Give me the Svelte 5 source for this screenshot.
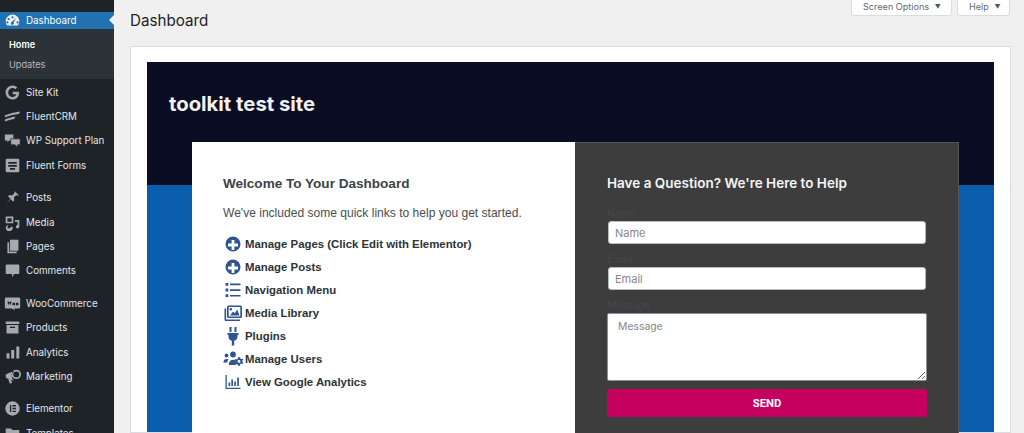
<script>
  const menuGroups = [
    [{ n: 'Site Kit', i: 'g' }, { n: 'FluentCRM', i: 'crm' }, { n: 'WP Support Plan', i: 'chat' }, { n: 'Fluent Forms', i: 'forms' }],
    [{ n: 'Posts', i: 'pin' }, { n: 'Media', i: 'media' }, { n: 'Pages', i: 'pages' }, { n: 'Comments', i: 'comment' }],
    [{ n: 'WooCommerce', i: 'woo' }, { n: 'Products', i: 'box' }, { n: 'Analytics', i: 'bars' }, { n: 'Marketing', i: 'mega' }],
    [{ n: 'Elementor', i: 'el' }, { n: 'Templates', i: 'folder' }]
  ];
  const links = [
    { t: 'Manage Pages (Click Edit with Elementor)', i: 'plus' },
    { t: 'Manage Posts', i: 'plus' },
    { t: 'Navigation Menu', i: 'list' },
    { t: 'Media Library', i: 'images' },
    { t: 'Plugins', i: 'plug' },
    { t: 'Manage Users', i: 'users' },
    { t: 'View Google Analytics', i: 'chart' }
  ];
</script>

{#snippet menuIcon(k)}
  <svg class="micon" viewBox="0 0 20 20" fill="#a7aaad">
    {#if k === 'dash'}
      <path fill="#f0f0f1" d="M10 3a8 8 0 0 0-8 8c0 2 .7 3.800 2 5h12c1.300-1.200 2-3 2-5a8 8 0 0 0-8-8zm0 2a1.300 1.300 0 1 1 0 2.600A1.300 1.300 0 0 1 10 5zM5.500 7a1.300 1.300 0 1 1 0 2.600 1.300 1.300 0 0 1 0-2.600zm9 0l-3.200 5.200a1.800 1.800 0 1 1-2.100-.6L14.500 7zM4 11a1.300 1.300 0 1 1 0 2.600A1.300 1.300 0 0 1 4 11zm12 0a1.300 1.300 0 1 1 0 2.600 1.300 1.300 0 0 1 0-2.600z" fill-rule="evenodd"/>
    {:else if k === 'g'}
      <path d="M17.500 9h-7.300v3h4.100c-.5 2-2.200 3.200-4.200 3.200A5.200 5.200 0 0 1 10 4.800c1.300 0 2.500.5 3.400 1.300l2.200-2.200A8.200 8.200 0 0 0 10 1.800a8.200 8.200 0 1 0 0 16.400c4.400 0 7.800-3.200 7.800-8 0-.4-.1-.8-.3-1.200z"/>
    {:else if k === 'crm'}
      <path d="M1 8.500C6 6.500 12 5 19 4l-1.500 3C12 7.600 6 9 1 11zM1 13.500c4-1.700 8-2.800 12.500-3.500L12 13c-4 .6-7.500 1.500-11 3z"/>
    {:else if k === 'chat'}
      <path d="M1 3h10v7H6l-2 2v-2H1z"/><path d="M8 8h11v7h-3v3l-3-3H8z" stroke="#1d2327" stroke-width=".8"/>
    {:else if k === 'forms'}
      <path fill-rule="evenodd" d="M3.500 2h13A1.500 1.500 0 0 1 18 3.500v13a1.500 1.500 0 0 1-1.500 1.500h-13A1.500 1.500 0 0 1 2 16.500v-13A1.500 1.500 0 0 1 3.500 2zM5 6v2h10V6zm0 3.500v2h10v-2zM7 13v2h6v-2z"/>
    {:else if k === 'pin'}
      <path d="M12.600 2.500l4.900 4.900-1.400.4-1.600-.6-2.800 2.900.4 3.300-1.400 1.400-2.800-2.800L3 16.900l4.600-5.500-2.800-2.800 1.400-1.400 3.300.4 2.900-2.800-.2-1.500z"/>
    {:else if k === 'media'}
      <path fill-rule="evenodd" d="M2 3h9v8H2zM4 5v4h5V5z"/><path d="M13 7h5v8a2 2 0 1 1-2-2V9h-3zM4 13h2a2 2 0 1 0 2 2h2a4 4 0 1 1-6-2z"/>
    {:else if k === 'pages'}
      <path d="M7 2h10v13H7z"/><path d="M4 5h2v11h9v2H4z"/>
    {:else if k === 'comment'}
      <path d="M3 3h14a1 1 0 0 1 1 1v9a1 1 0 0 1-1 1h-5l-2.500 4v-4H3a1 1 0 0 1-1-1V4a1 1 0 0 1 1-1z"/>
    {:else if k === 'woo'}
      <path fill-rule="evenodd" d="M2.500 3h15A1.500 1.500 0 0 1 19 4.500v10a1.500 1.500 0 0 1-1.500 1.500H12l1 2-4-2H2.500A1.500 1.500 0 0 1 1 14.500v-10A1.500 1.500 0 0 1 2.500 3zM4 8l1 4 1.500-3 1 3 1.500-4zm6 1v3h3V9zm4 0v3h3V9z"/>
    {:else if k === 'box'}
      <path d="M2 3h16v3H2zM3 7h14v10H3zm4 2v1.500h6V9z" fill-rule="evenodd"/>
    {:else if k === 'bars'}
      <path d="M3 11h3.500v6H3zM8.500 7H12v10H8.500zM14.500 3H18v14h-3.500z"/>
    {:else if k === 'mega'}
      <path fill-rule="evenodd" d="M14.500 2a5.500 5.500 0 1 1 0 11 5.500 5.500 0 0 1 0-11zm0 2a3.500 3.500 0 1 0 0 7 3.500 3.500 0 0 0 0-7zM11.500 3.500L3 7a2.500 2.500 0 0 0-1 2.500A2.500 2.500 0 0 0 3 12l2 .6 1.500 5.400h3l-1.200-4.300 3.700 1.300a7 7 0 0 1 0-11.500z"/>
    {:else if k === 'el'}
      <path fill-rule="evenodd" d="M10 1.500a8.500 8.500 0 1 1 0 17 8.500 8.500 0 0 1 0-17zM7 6v8h1.500V6zm3 0v1.500h4V6zm0 3.200v1.600h4V9.200zm0 3.300V14h4v-1.500z"/>
    {:else if k === 'folder'}
      <path d="M2 4h6l2 2h8v11H2z"/>
    {/if}
  </svg>
{/snippet}

{#snippet linkIcon(k)}
  <svg class="licon" viewBox="0 0 22 20" fill="#2e5592">
    {#if k === 'plus'}
      <path fill-rule="evenodd" d="M11 2.500a7.500 7.500 0 1 1 0 15 7.500 7.500 0 0 1 0-15zM9.600 6v3.600H6v2.800h3.600V16h2.800v-3.600H16V9.600h-3.600V6z"/>
    {:else if k === 'list'}
      <path d="M3.500 3h2.800v2.800H3.500zM3.500 8.600h2.800v2.800H3.500zM3.500 14.200h2.800V17H3.500zM8 3.500h10.500v1.700H8zM8 9.200h10.500v1.700H8zM8 14.900h10.500v1.700H8z"/>
    {:else if k === 'images'}
      <path fill-rule="evenodd" d="M6.500 2.500h12A1.500 1.500 0 0 1 20 4v9.500a1.500 1.500 0 0 1-1.500 1.500h-12A1.500 1.500 0 0 1 5 13.500V4a1.500 1.500 0 0 1 1.500-1.500zm.2 1.600v9.300h11.600V4.100zM8 12.500l3-4 1.800 1.800 2.400-3.800 2.300 6zM8.800 5a1.300 1.300 0 1 1 0 2.600 1.300 1.300 0 0 1 0-2.600z"/>
      <path d="M2.500 5.500h1.600v10.300a.7.700 0 0 0 .7.700h13.200V18H4a1.600 1.600 0 0 1-1.500-1.600z"/>
    {:else if k === 'plug'}
      <path d="M7.500 1h2v5h-2zM12.500 1h2v5h-2zM5.500 7h11v2h-1v1.500a4.500 4.500 0 0 1-3.300 4.300V19.500h-2.400v-4.700a4.500 4.500 0 0 1-3.300-4.300V9h-1z"/>
    {:else if k === 'users'}
      <circle cx="4.500" cy="6.500" r="1.900"/><circle cx="11" cy="5.500" r="2.900"/>
      <path d="M1.500 13.500a3 3 0 0 1 3-3.500h2c-.8 1-1 2-1 3.500zM6.800 16c0-3.200 1.700-5.200 4.500-5.200 1 0 1.800.2 2.500.7v4.500z"/>
      <path fill-rule="evenodd" d="M17 8l1 .2.300 1.300 1.200.6 1.200-.4.600 1-.9.900v1.400l.9.900-.6 1-1.200-.4-1.200.6L18 16.800h-2l-.3-1.300-1.200-.6-1.200.4-.6-1 .9-.9v-1.400l-.9-.9.600-1 1.200.4 1.200-.6.300-1.300zm0 3a1.400 1.400 0 1 0 0 2.800 1.400 1.400 0 0 0 0-2.800z"/>
    {:else if k === 'chart'}
      <path d="M3.500 3h1.300v12.700h13.700V17h-15z"/><path d="M6.500 10.500h1.700V14H6.500zM9.300 7.500h1.700V14H9.300zM12.200 9.500h1.700V14h-1.700zM15.200 5.500h1.700V14h-1.700z"/>
    {/if}
  </svg>
{/snippet}

<div class="screen">
  <aside class="side">
    <div class="cap"></div>
    <div class="item current">
      {@render menuIcon('dash')}<span>Dashboard</span>
      <i class="notch"></i>
    </div>
    <div class="sub">
      <div class="sub-on">Home</div>
      <div>Updates</div>
    </div>
    {#each menuGroups as group}
      <div class="group">
        {#each group as m}
          <div class="item">{@render menuIcon(m.i)}<span>{m.n}</span></div>
        {/each}
      </div>
    {/each}
  </aside>

  <main class="main">
    <div class="tabs">
      <div class="tab opts">Screen Options <b>▼</b></div>
      <div class="tab help">Help <b>▼</b></div>
    </div>
    <h1>Dashboard</h1>
    <section class="card">
      <div class="banner">
        <div class="hero">
          <div class="site">toolkit test site</div>
        </div>
        <div class="panels">
          <div class="left">
            <h2>Welcome To Your Dashboard</h2>
            <p>We've included some quick links to help you get started.</p>
            <ul>
              {#each links as l}
                <li>{@render linkIcon(l.i)}<span>{l.t}</span></li>
              {/each}
            </ul>
          </div>
          <div class="right">
            <h3>Have a Question? We're Here to Help</h3>
            <label for="f-name">Name</label>
            <input id="f-name" placeholder="Name" />
            <label for="f-email">Email</label>
            <input id="f-email" placeholder="Email" />
            <label for="f-msg">Message</label>
            <textarea id="f-msg" placeholder="Message"></textarea>
            <button>SEND</button>
          </div>
        </div>
      </div>
    </section>
  </main>
</div>

<style>
  :global(body) { margin: 0; background: #f0f0f1; }
  .screen {
    display: flex;
    height: 433px;
    overflow: hidden;
    background: #f0f0f1;
    font-family: Inter, "Liberation Sans", sans-serif;
    position: relative;
  }
  .side {
    width: 114px;
    flex: none;
    background: #1d2327;
    color: #f0f0f1;
    font-size: 9.800px;
  }
  .cap { height: 12px; }
  .item {
    height: 24.4px;
    display: flex;
    align-items: center;
    position: relative;
    color: #e4e6e8;
  }
  .item span { margin-left: 5px; white-space: nowrap; }
  .micon { width: 17px; height: 17px; margin-left: 4px; flex: none; }
  .current {
    height: 17px;
    background: #2271b1;
    color: #fff;
  }
  .notch {
    position: absolute;
    right: 0;
    top: 3px;
    border: 5.500px solid transparent;
    border-right-color: #f0f0f1;
    border-left-width: 0;
  }
  .sub {
    height: 50px;
    background: #2c3338;
    box-sizing: border-box;
    padding: 6px 0 0 9px;
    font-size: 9.200px;
    color: #b4b9be;
    line-height: 20px;
  }
  .sub-on { color: #fff; font-weight: 600; }
  .group { margin-bottom: 8px; }
  .sub + .group { margin-top: 1px; }

  .main {
    flex: 1;
    min-width: 0;
    position: relative;
    padding: 0 13px 0 16px;
  }
  .tabs {
    position: absolute;
    top: 0;
    right: 14px;
    display: flex;
    gap: 5px;
  }
  .tab {
    height: 16px;
    box-sizing: border-box;
    background: #fff;
    border: 1px solid #dcdcde;
    border-top: 0;
    border-radius: 0 0 3px 3px;
    font-size: 9.100px;
    line-height: 14px;
    color: #646970;
    white-space: nowrap;
    padding-left: 11px;
  }
  .opts { width: 101px; }
  .help { width: 53px; }
  .tab b { font-size: 6px; margin-left: 3px; font-weight: 400; color: #50575e; vertical-align: 1px; }
  h1 {
    margin: 0;
    padding-top: 11px;
    height: 46px;
    box-sizing: border-box;
    font-size: 15.200px;
    line-height: 20px;
    font-weight: 400;
    color: #1d2327;
  }
  .card {
    height: 387px;
    box-sizing: border-box;
    background: #fff;
    border: 1px solid #dcdcde;
    padding: 15px 16px 0;
  }
  .banner {
    height: 100%;
    background: linear-gradient(#0a0d24 0 123px, #0a5cad 123px);
  }
  .hero {
    height: 80px;
    padding-left: 22px;
    box-sizing: border-box;
    padding-top: 29px;
  }
  .site {
    color: #f2f2f2;
    font-size: 20.300px;
    line-height: 26px;
    font-weight: 700;
  }
  .panels {
    display: flex;
    margin: 0 35px 0 45px;
    height: 300px;
  }
  .left {
    width: 383px;
    background: #fff;
    box-sizing: border-box;
    padding: 33px 0 0 31px;
    font-family: "Liberation Sans", Arial, sans-serif;
    color: #3c434a;
  }
  h2 {
    margin: 0;
    font-size: 13.560px;
    line-height: 18px;
    font-weight: 700;
    color: #3c434a;
  }
  p {
    margin: 11px 0 0;
    font-size: 12.050px;
    line-height: 18px;
    color: #4a4d52;
  }
  ul { list-style: none; margin: 10px 0 0; padding: 0; }
  li {
    height: 23px;
    display: flex;
    align-items: center;
    font-size: 11.400px;
    font-weight: 700;
    color: #2c3338;
  }
  li span { margin-left: 1.500px; white-space: nowrap; }
  .licon { width: 22px; height: 20px; flex: none; margin-left: -1.500px; }
  .right {
    width: 384px;
    background: #3d3d3d;
    box-sizing: border-box;
    padding: 31px 31px 0 32px;
    display: flex;
    flex-direction: column;
    border-top: 1px solid #555;
    border-right: 1px solid #555;
  }
  h3 {
    margin: 0 0 14px;
    font-size: 13.500px;
    line-height: 18px;
    font-weight: 600;
    color: #f5f5f5;
  }
  label {
    font-size: 10px;
    line-height: 14px;
    padding-bottom: 1px;
    color: #45484f;
  }
  input, textarea {
    box-sizing: border-box;
    background: #fff;
    font-family: Inter, "Liberation Sans", sans-serif;
    color: #333;
    outline: 0;
  }
  input::placeholder, textarea::placeholder { color: #85888c; opacity: 1; }
  input {
    height: 23px;
    margin: 0 1px 8px;
    width: calc(100% - 2px);
    border: 1px solid #bbb;
    border-radius: 3px;
    padding: 0 6px;
    font-size: 11px;
  }
  textarea {
    height: 68px;
    width: 100%;
    padding: 6px 10px;
    border: 1px solid #8c8f94;
    border-radius: 2px;
    margin-bottom: 8px;
    display: block;
    font-size: 10.400px;
  }
  button {
    height: 28px;
    border: 0;
    border-radius: 2px;
    background: #c5005e;
    color: #fff;
    font-family: Roboto, "Liberation Sans", sans-serif;
    font-weight: 700;
    font-size: 11.300px;
    padding: 0;
  }
</style>
